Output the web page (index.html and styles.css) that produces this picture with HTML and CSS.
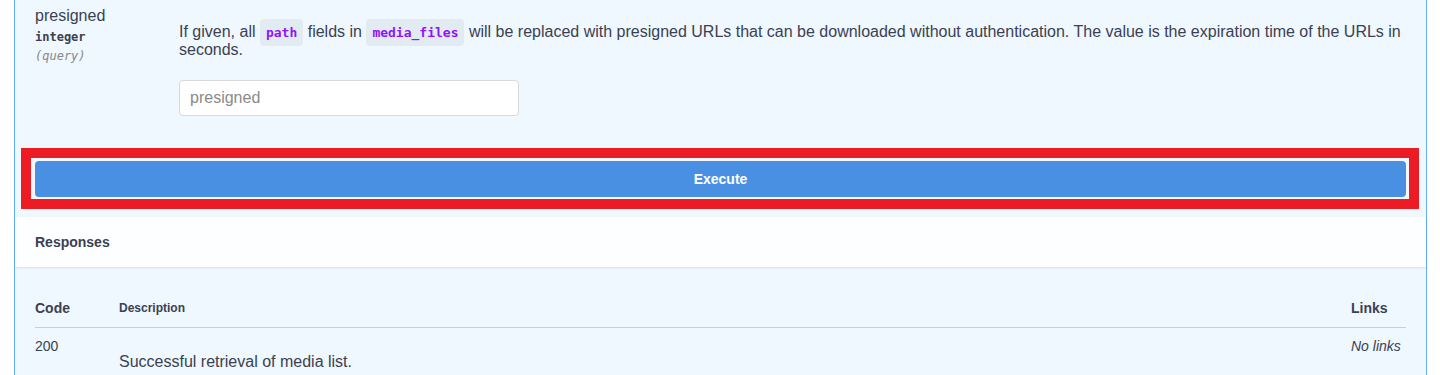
FILE: index.html
```html
<!DOCTYPE html>
<html lang="en">
<head>
  <meta charset="UTF-8">
  <meta name="viewport" content="width=device-width, initial-scale=1.0">
  <title>GET /media</title>
  <link rel="stylesheet" href="styles.css">
</head>
<body>
  <div class="opblock">
    <div class="parameters">
      <div class="param-row">
        <div class="param-name">
          <div class="param-title">presigned</div>
          <div class="param-type">integer</div>
          <div class="param-in">(query)</div>
        </div>
        <div class="param-desc">
          <p>If given, all <code>path</code> fields in <code>media_files</code> will be replaced with presigned URLs that can be downloaded without authentication. The value is the expiration time of the URLs in seconds.</p>
          <input type="text" class="param-input" placeholder="presigned">
        </div>
      </div>
    </div>

    <div class="execute-wrapper">
      <div class="highlight">
        <button class="btn-execute">Execute</button>
      </div>
    </div>

    <div class="section-header">
      <h4>Responses</h4>
    </div>

    <div class="responses-inner">
      <table class="responses-table">
        <thead>
          <tr>
            <th class="col-code">Code</th>
            <th class="col-desc">Description</th>
            <th class="col-links">Links</th>
          </tr>
        </thead>
        <tbody>
          <tr>
            <td class="col-code">200</td>
            <td class="col-desc"><p>Successful retrieval of media list.</p></td>
            <td class="col-links"><i>No links</i></td>
          </tr>
        </tbody>
      </table>
    </div>
  </div>
</body>
</html>
```

FILE: styles.css
```css
body {
  margin: 0;
  background: #fff;
  font-family: "Liberation Sans", Arial, sans-serif;
  color: #3b4151;
}

.opblock {
  margin: 0 13px 0 14px;
  border: 1px solid #61affe;
  border-top: none;
  border-bottom: none;
  background: #eff7ff;
  height: 375px;
}

.parameters {
  padding: 7px 20px 32px;
}

.param-row {
  display: flex;
}

.param-name {
  width: 144px;
  flex-shrink: 0;
}

.param-title {
  font-size: 16px;
  line-height: 18px;
}

.param-type {
  font-family: "DejaVu Sans Mono", monospace;
  font-size: 12px;
  font-weight: bold;
  padding: 5px 0;
  line-height: 14px;
}

.param-in {
  font-family: "DejaVu Sans Mono", monospace;
  font-size: 12px;
  font-style: italic;
  color: #888;
  line-height: 14px;
}

.param-desc {
  flex: 1;
}

.param-desc p {
  margin: 16px 0 0;
  font-size: 16px;
  line-height: 18px;
}

.param-desc code {
  display: inline-block;
  font-family: "DejaVu Sans Mono", monospace;
  font-size: 13px;
  font-weight: 600;
  line-height: 15px;
  color: #9012fe;
  background: rgba(0, 0, 0, 0.05);
  border-radius: 4px;
  padding: 6px 6px;
  margin: -6px 0;
}

.param-input {
  display: block;
  margin-top: 21px;
  width: 340px;
  height: 36px;
  box-sizing: border-box;
  border: 1px solid #d9d9d9;
  border-radius: 4px;
  padding: 8px 10px;
  font-family: "Liberation Sans", Arial, sans-serif;
  font-size: 16px;
  background: #fff;
}

.param-input::placeholder {
  color: #8a8a8a;
}

.execute-wrapper {
  padding: 0 7px 8px 6px;
}

.highlight {
  border: 10px solid #ed1c24;
  padding: 3px 3px 2px 4px;
  background: #f2f8fe;
}

.btn-execute {
  display: block;
  width: 100%;
  height: 36px;
  border: none;
  border-radius: 4px;
  background: #4990e2;
  color: #fff;
  font-family: "Liberation Sans", Arial, sans-serif;
  font-size: 14px;
  font-weight: bold;
}

.section-header {
  height: 50px;
  padding: 0 20px;
  display: flex;
  align-items: center;
  background: rgba(255, 255, 255, 0.8);
  box-shadow: 0 1px 2px rgba(0, 0, 0, 0.1);
}

.section-header h4 {
  margin: 0;
  font-size: 14px;
}

.responses-inner {
  padding: 21px 20px 0;
}

.responses-table {
  width: 100%;
  border-collapse: collapse;
}

.responses-table th {
  text-align: left;
  padding: 12px 0 11px;
  font-size: 14px;
  line-height: 16px;
  border-bottom: 1px solid #c8ceda;
}

.responses-table th.col-desc {
  font-size: 12px;
}

.responses-table td {
  vertical-align: top;
  padding: 10px 0;
  font-size: 14px;
  line-height: 16px;
}

.col-code {
  width: 84px;
}

.col-links {
  width: 55px;
}

.responses-table td.col-desc p {
  margin: 15px 0 0;
  font-size: 16px;
  line-height: 18px;
}
```
